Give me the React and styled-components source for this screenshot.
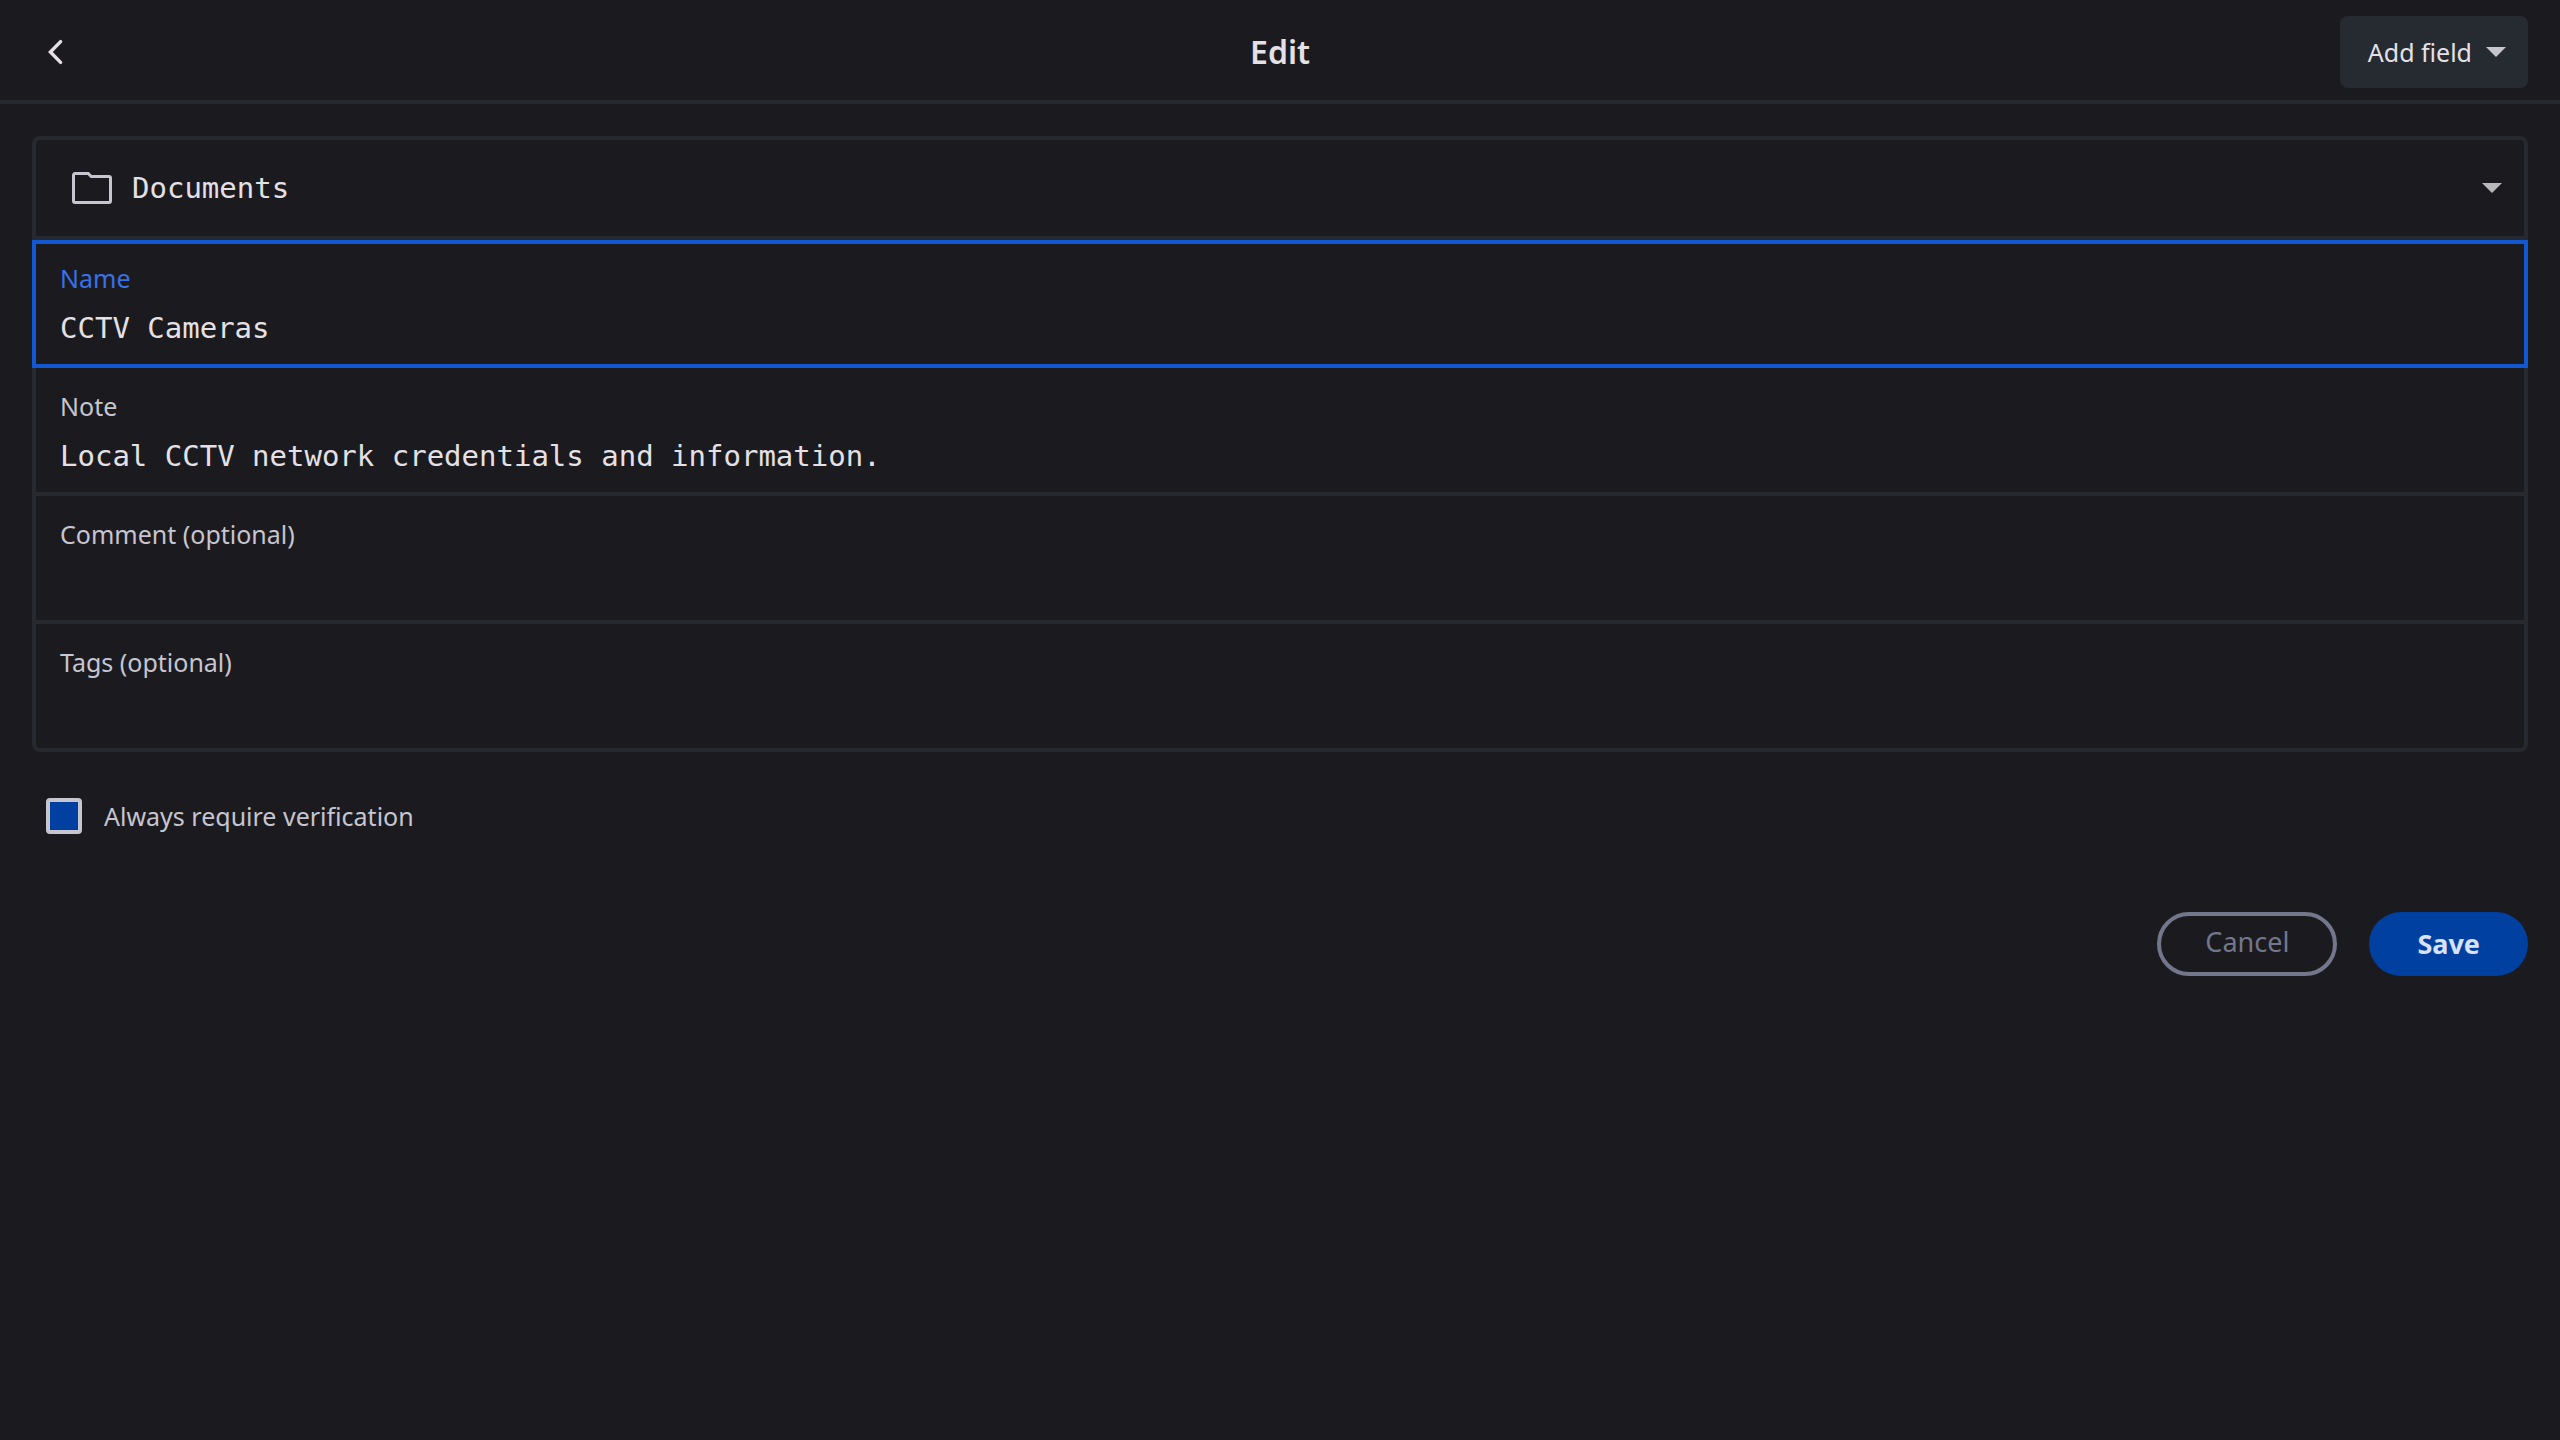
import React, { useState } from 'react'
import styled, { createGlobalStyle } from 'styled-components';

const GlobalStyle = createGlobalStyle`
    * {
        box-sizing: border-box;
    }
    body {
        margin: 0;
        background: #1b1b1f;
        color: #e4e1e6;
        font-family: 'Noto Sans', sans-serif;
        font-size: 25px;
        line-height: 32px;
    }
    button, input, select {
        margin: 0;
        padding: 0;
        border: 0;
        background: none;
        color: inherit;
        font: inherit;
    }
    button, select {
        cursor: pointer;
    }
`

const Header = styled.header`
    display: grid;
    grid-template-columns: 1fr auto 1fr;
    align-items: center;
    height: 104px;
    padding: 4px 32px 0;
    border-bottom: 4px solid #26292f;
`

const Title = styled.h1`
    margin: 0;
    font-size: 32px;
    font-weight: 600;
    line-height: 40px;
`

const BackButton = styled.button`
    justify-self: start;
    display: flex;
    padding: 12px;
`

const AddFieldButton = styled.button`
    justify-self: end;
    display: flex;
    align-items: center;
    gap: 14px;
    height: 72px;
    padding: 0 22px 0 28px;
    border-radius: 8px;
    background: #262a31;
    color: #e4e1e6;
`

const EditForm = styled.form`
    padding: 32px;
`

const FolderRow = styled.div`
    display: flex;
    align-items: center;
    gap: 20px;
    height: 104px;
    padding: 0 22px 0 36px;
    border: 4px solid #26292f;
    border-radius: 8px 8px 0 0;
`

const FolderSelect = styled.select`
    flex: 1;
    appearance: none;
    outline: none;
    font-family: 'DejaVu Sans Mono', monospace;
    font-size: 29px;
    line-height: 40px;

    option {
        background: #1b1b1f;
    }
`

const FieldRow = styled.div`
    display: flex;
    flex-direction: column;
    gap: 14px;
    padding: 22px 24px 16px;
    border: 4px solid ${({ $active }) => ($active ? '#1158d2' : '#26292f')};
    border-top: 0;
    box-shadow: ${({ $active }) => ($active ? 'inset 0 4px 0 #1158d2' : 'none')};

    &:last-child {
        border-radius: 0 0 8px 8px;
    }
`

const FieldLabel = styled.label`
    color: ${({ $active }) => ($active ? '#3871e8' : '#c6c5d0')};
`

const FieldInput = styled.input`
    width: 100%;
    height: 40px;
    outline: none;
    font-family: 'DejaVu Sans Mono', monospace;
    font-size: 29px;
    line-height: 40px;
`

const VerifyLabel = styled.label`
    display: flex;
    align-items: center;
    gap: 22px;
    width: fit-content;
    margin-top: 46px;
    padding-left: 14px;
    color: #c6c5d0;
`

const VerifyCheckbox = styled.input`
    appearance: none;
    width: 36px;
    height: 36px;
    border: 4px solid #c6c5d0;
    border-radius: 4px;
    background: #0040a1;
`

const Actions = styled.div`
    display: flex;
    justify-content: flex-end;
    gap: 32px;
    margin-top: 78px;
`

const CancelButton = styled.button`
    height: 64px;
    padding: 0 44px 4px;
    border: 4px solid #73778b;
    border-radius: 32px;
    color: #73778b;
    font-size: 27px;
`

const SaveButton = styled.button`
    height: 64px;
    padding: 0 48px;
    border-radius: 32px;
    background: #0040a1;
    color: #dae1ff;
    font-size: 27px;
    font-weight: 700;
`

function Caret({ color }) {
    return (
        <svg width="20" height="10" viewBox="0 0 20 10" aria-hidden="true">
            <path d="M0 0h20L10 10z" fill={color} />
        </svg>
    )
}

function Field({ id, label, value, active, onFocus, onChange }) {
    return (
        <FieldRow $active={active}>
            <FieldLabel htmlFor={id} $active={active}>{label}</FieldLabel>
            <FieldInput
                id={id}
                type="text"
                value={value}
                onFocus={() => onFocus(id)}
                onChange={(e) => onChange(id, e.target.value)}
            />
        </FieldRow>
    )
}

const fields = [
    { id: 'name', label: 'Name' },
    { id: 'note', label: 'Note' },
    { id: 'comment', label: 'Comment (optional)' },
    { id: 'tags', label: 'Tags (optional)' },
]

function App() {
    const [activeField, setActiveField] = useState('name')
    const [values, setValues] = useState({
        name: 'CCTV Cameras',
        note: 'Local CCTV network credentials and information.',
        comment: '',
        tags: '',
    })

    const handleChange = (id, value) => {
        setValues({ ...values, [id]: value })
    }

    return (
        <>
            <GlobalStyle />
            <Header>
                <BackButton type="button" aria-label="Back">
                    <svg width="24" height="32" viewBox="0 0 24 32" fill="none" aria-hidden="true">
                        <path d="M16.6 5.6L6.4 16l10.2 10.4" stroke="#e4e1e6" strokeWidth="3.4" strokeLinecap="round" />
                    </svg>
                </BackButton>
                <Title>Edit</Title>
                <AddFieldButton type="button">
                    Add field
                    <Caret color="#c6c5d0" />
                </AddFieldButton>
            </Header>
            <EditForm onSubmit={(e) => e.preventDefault()}>
                <div>
                    <FolderRow>
                        <svg width="40" height="32" viewBox="0 0 40 32" fill="none" aria-hidden="true">
                            <path
                                d="M3 1.5h13.2l3 3H37a1.5 1.5 0 0 1 1.5 1.5v23a1.5 1.5 0 0 1-1.5 1.5H3A1.5 1.5 0 0 1 1.5 29V3A1.5 1.5 0 0 1 3 1.5z"
                                stroke="#c6c5d0"
                                strokeWidth="3"
                            />
                        </svg>
                        <FolderSelect aria-label="Folder" defaultValue="Documents">
                            <option>Documents</option>
                        </FolderSelect>
                        <Caret color="#b8b8b8" />
                    </FolderRow>
                    {fields.map(({ id, label }) => (
                        <Field
                            key={id}
                            id={id}
                            label={label}
                            value={values[id]}
                            active={activeField === id}
                            onFocus={setActiveField}
                            onChange={handleChange}
                        />
                    ))}
                </div>
                <VerifyLabel>
                    <VerifyCheckbox type="checkbox" />
                    Always require verification
                </VerifyLabel>
                <Actions>
                    <CancelButton type="button">Cancel</CancelButton>
                    <SaveButton type="submit">Save</SaveButton>
                </Actions>
            </EditForm>
        </>
    )
}

export default App;
